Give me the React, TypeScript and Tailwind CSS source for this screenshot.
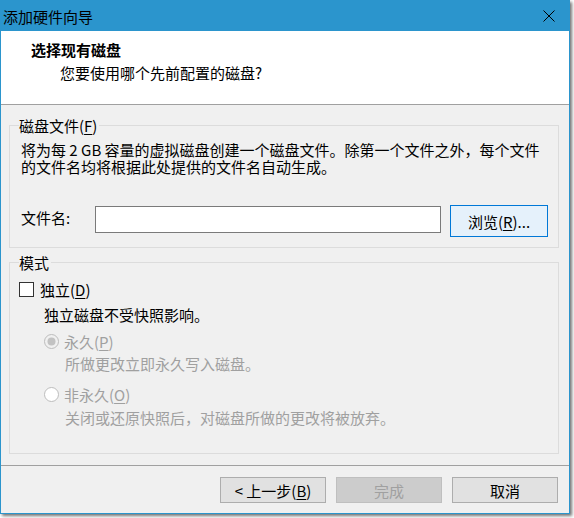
import React from 'react';

const U = ({ children }: { children: React.ReactNode }) => (
  <span className="underline underline-offset-[2px] decoration-1">{children}</span>
);

function GroupBox({ title, className = '', children }: { title: React.ReactNode; className?: string; children: React.ReactNode }) {
  return (
    <fieldset className={`ml-[8px] mr-[10px] border border-[#dcdcdc] pl-[11px] ${className}`}>
      <legend className="-ml-[2px] pr-[2px] leading-[17px]">{title}</legend>
      {children}
    </fieldset>
  );
}

function Radio({ checked }: { checked?: boolean }) {
  return (
    <svg width="15" height="15" viewBox="0 0 15 15" className="shrink-0">
      <circle cx="7.5" cy="7.5" r="7" fill={checked ? '#f0f0f0' : '#ffffff'} stroke="#bcbcbc" strokeWidth="1" />
      {checked && <circle cx="7.5" cy="7.5" r="4" fill="#c2c2c2" />}
    </svg>
  );
}

export default function App() {
  return (
    <div className="w-[574px] h-[518px] bg-white font-['Noto_Sans_CJK_SC',sans-serif] text-[15px] text-black">
      <div className="w-[570px] h-[514px] bg-[#2b95cd] p-px flex flex-col shadow-[2px_2px_3px_rgba(0,0,0,0.55)]">
        {/* title bar */}
        <div className="h-[30px] flex items-center justify-between pl-[2px] pr-[14px]">
          <span className="leading-[17px]">添加硬件向导</span>
          <svg width="12" height="12" viewBox="0 0 12 12">
            <path d="M0.5 0.5 L11.5 11.5 M11.5 0.5 L0.5 11.5" stroke="#000" strokeWidth="1" />
          </svg>
        </div>

        {/* header */}
        <div className="h-[74px] bg-white border-b border-[#a0a0a0] pl-[30px] pt-[10px]">
          <div className="font-bold leading-[17px]">选择现有磁盘</div>
          <div className="mt-[6px] ml-[29px] leading-[17px]">您要使用哪个先前配置的磁盘?</div>
        </div>

        {/* body */}
        <div className="flex-1 bg-[#f0f0f0] flex flex-col pt-[12px]">
          <GroupBox title={<>磁盘文件(<U>F</U>)</>} className="pb-[10px]">
            <div className="pt-[7px] leading-[17px] whitespace-nowrap">
              <div>将为每 2 GB 容量的虚拟磁盘创建一个磁盘文件。除第一个文件之外，每个文件</div>
              <div>的文件名均将根据此处提供的文件名自动生成。</div>
            </div>
            <div className="mt-[30px] flex items-start h-[32px]">
              <span className="w-[74px] mt-[4px] leading-[17px]">文件名:</span>
              <div className="mt-px w-[346px] h-[27px] border border-[#7a7a7a] bg-white" />
              <button className="ml-[9px] w-[98px] h-[32px] border border-[#0078d7] bg-[#e5f1fb] leading-[17px]">
                浏览(<U>R</U>)...
              </button>
            </div>
          </GroupBox>

          <GroupBox title="模式" className="mt-[6px] pb-[27px]">
            <div className="pt-[10px] flex flex-col leading-[17px]">
              <div className="flex items-center -ml-[2px]">
                <span className="w-[15px] h-[15px] border border-[#333333] bg-white shrink-0" />
                <span className="ml-[6px]">独立(<U>D</U>)</span>
              </div>
              <div className="mt-[8px] ml-[23px]">独立磁盘不受快照影响。</div>
              <div className="mt-[10px] ml-[23px] flex items-center text-[#a0a0a0]">
                <Radio checked />
                <span className="ml-[5px]">永久(<U>P</U>)</span>
              </div>
              <div className="mt-[5px] ml-[44px] text-[#a0a0a0]">所做更改立即永久写入磁盘。</div>
              <div className="mt-[14px] ml-[23px] flex items-center text-[#a0a0a0]">
                <Radio />
                <span className="ml-[5px]">非永久(<U>O</U>)</span>
              </div>
              <div className="mt-[6px] ml-[44px] text-[#a0a0a0]">关闭或还原快照后，对磁盘所做的更改将被放弃。</div>
            </div>
          </GroupBox>

          {/* footer */}
          <div className="mt-auto border-t border-[#a0a0a0] pt-[11px] pb-[10px] pr-[11px] flex justify-end gap-[10px]">
            <button className="w-[106px] h-[26px] border border-[#adadad] bg-[#e1e1e1] leading-[17px]">
              &lt; 上一步(<U>B</U>)
            </button>
            <button className="w-[106px] h-[26px] border border-[#bfbfbf] bg-[#cccccc] text-[#a0a0a0] leading-[17px]">
              完成
            </button>
            <button className="w-[106px] h-[26px] border border-[#adadad] bg-[#e1e1e1] leading-[17px]">
              取消
            </button>
          </div>
        </div>
      </div>
    </div>
  );
}
